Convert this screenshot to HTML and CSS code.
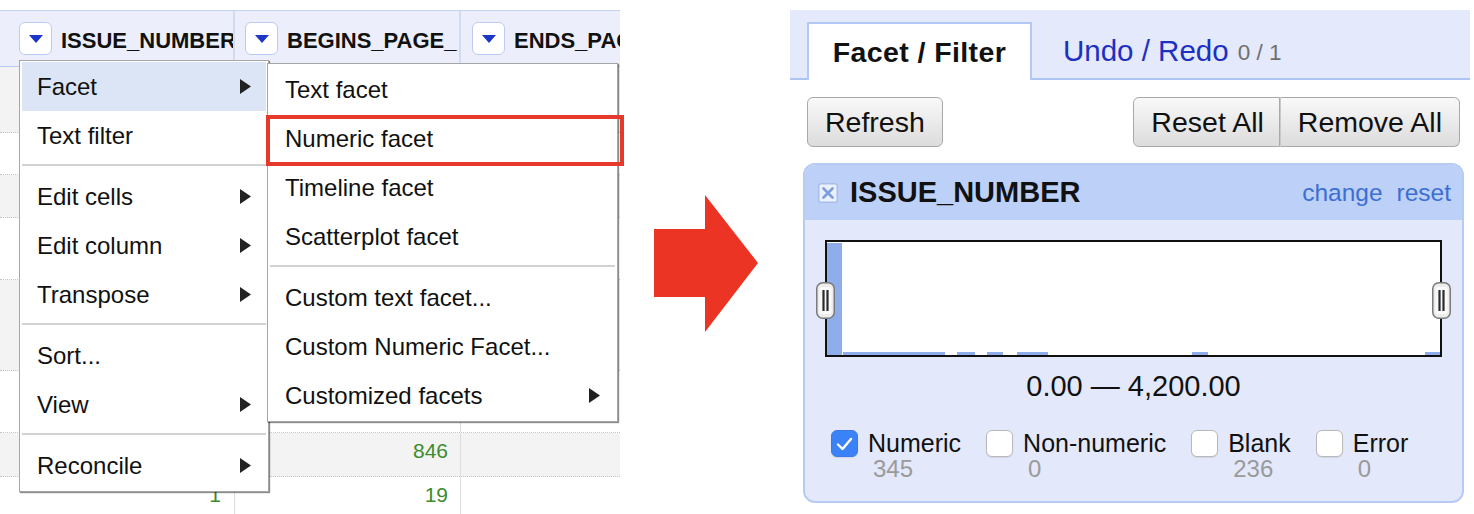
FILE: index.html
```html
<!DOCTYPE html>
<html>
<head>
<meta charset="utf-8">
<title>Numeric facet</title>
<link rel="stylesheet" href="styles.css">
</head>
<body>
<div class="page">
  <div class="grid-shot">
    <div class="table">
      <div class="thead">
        <div class="th c1"><span class="dd"><svg width="14" height="8" viewBox="0 0 14 8"><path d="M0 0H14L7 8Z" fill="#1b36c8"/></svg></span><span class="hname">ISSUE_NUMBER</span></div>
        <div class="th c2"><span class="dd"><svg width="14" height="8" viewBox="0 0 14 8"><path d="M0 0H14L7 8Z" fill="#1b36c8"/></svg></span><span class="hname">BEGINS_PAGE_</span></div>
        <div class="th c3"><span class="dd"><svg width="14" height="8" viewBox="0 0 14 8"><path d="M0 0H14L7 8Z" fill="#1b36c8"/></svg></span><span class="hname">ENDS_PAG</span></div>
      </div>
      <div class="tr r1 alt"><div class="td c1"></div><div class="td c2"></div><div class="td c3"></div></div>
      <div class="tr r2"><div class="td c1"></div><div class="td c2"></div><div class="td c3"></div></div>
      <div class="tr r3 alt"><div class="td c1"></div><div class="td c2"></div><div class="td c3"></div></div>
      <div class="tr r4"><div class="td c1"></div><div class="td c2"></div><div class="td c3"></div></div>
      <div class="tr r5 alt"><div class="td c1"></div><div class="td c2"></div><div class="td c3"></div></div>
      <div class="tr r6"><div class="td c1"></div><div class="td c2"></div><div class="td c3"></div></div>
      <div class="tr r7 alt"><div class="td c1"></div><div class="td c2">846</div><div class="td c3"></div></div>
      <div class="tr r8"><div class="td c1">1</div><div class="td c2">19</div><div class="td c3"></div></div>
    </div>

    <div class="menu main-menu">
      <div class="mi on"><span>Facet</span><svg class="arr" width="11" height="15" viewBox="0 0 11 15"><path d="M0 0L11 7.5L0 15Z"/></svg></div>
      <div class="mi"><span>Text filter</span></div>
      <div class="sep"></div>
      <div class="mi"><span>Edit cells</span><svg class="arr" width="11" height="15" viewBox="0 0 11 15"><path d="M0 0L11 7.5L0 15Z"/></svg></div>
      <div class="mi"><span>Edit column</span><svg class="arr" width="11" height="15" viewBox="0 0 11 15"><path d="M0 0L11 7.5L0 15Z"/></svg></div>
      <div class="mi"><span>Transpose</span><svg class="arr" width="11" height="15" viewBox="0 0 11 15"><path d="M0 0L11 7.5L0 15Z"/></svg></div>
      <div class="sep"></div>
      <div class="mi"><span>Sort...</span></div>
      <div class="mi"><span>View</span><svg class="arr" width="11" height="15" viewBox="0 0 11 15"><path d="M0 0L11 7.5L0 15Z"/></svg></div>
      <div class="sep"></div>
      <div class="mi"><span>Reconcile</span><svg class="arr" width="11" height="15" viewBox="0 0 11 15"><path d="M0 0L11 7.5L0 15Z"/></svg></div>
    </div>

    <div class="menu sub-menu">
      <div class="mi"><span>Text facet</span></div>
      <div class="mi"><span>Numeric facet</span></div>
      <div class="mi"><span>Timeline facet</span></div>
      <div class="mi"><span>Scatterplot facet</span></div>
      <div class="sep"></div>
      <div class="mi"><span>Custom text facet...</span></div>
      <div class="mi"><span>Custom Numeric Facet...</span></div>
      <div class="mi"><span>Customized facets</span><svg class="arr" width="11" height="15" viewBox="0 0 11 15"><path d="M0 0L11 7.5L0 15Z"/></svg></div>
    </div>

    <div class="highlight-box"></div>
  </div>

  <div class="arrow-wrap">
    <svg width="104" height="137" viewBox="0 0 104 137"><path d="M0 34H51V0L104 68L51 137V102H0Z" fill="#ec3425"/></svg>
  </div>

  <div class="side">
    <div class="tabs">
      <div class="tab active">Facet / Filter</div>
      <div class="tab other"><span class="tlink">Undo / Redo</span><span class="tcount">0 / 1</span></div>
    </div>
    <div class="toolbar">
      <div class="btn">Refresh</div>
      <div class="grp">
        <div class="btn">Reset All</div>
        <div class="btn">Remove All</div>
      </div>
    </div>
    <div class="facet">
      <div class="fhead">
        <svg class="fclose" width="20" height="20" viewBox="0 0 20 20"><rect x="0.75" y="0.75" width="18.5" height="18.5" rx="2" fill="#eaf0fd" stroke="#a9bdea" stroke-width="1.5"/><path d="M5.5 5.5L14.5 14.5M14.5 5.5L5.5 14.5" stroke="#7d9ddf" stroke-width="2.6" stroke-linecap="round"/></svg>
        <span class="ftitle">ISSUE_NUMBER</span>
        <span class="flinks"><span>change</span><span>reset</span></span>
      </div>
      <div class="fbody">
        <div class="hist">
          <svg width="613" height="113" viewBox="0 0 613 113">
            <rect x="0" y="1" width="15" height="112" fill="#8fadea"/>
            <rect x="16" y="110" width="102" height="3" fill="#8fadea"/>
            <rect x="130" y="110" width="18" height="3" fill="#8fadea"/>
            <rect x="160" y="110" width="16" height="3" fill="#8fadea"/>
            <rect x="190" y="110" width="31" height="3" fill="#8fadea"/>
            <rect x="365" y="110" width="16" height="3" fill="#8fadea"/>
            <rect x="598" y="110" width="15" height="3" fill="#8fadea"/>
          </svg>
          <svg class="handle left" width="19" height="37" viewBox="0 0 19 37"><rect x="0.75" y="0.75" width="17.5" height="35.5" rx="6" fill="#ececec" stroke="#7a7a7a" stroke-width="1.5"/><rect x="3.5" y="5" width="12" height="27" rx="2" fill="#fafafa"/><path d="M7.5 8V29M11.5 8V29" stroke="#2b2b2b" stroke-width="2.2"/></svg>
          <svg class="handle right" width="19" height="37" viewBox="0 0 19 37"><rect x="0.75" y="0.75" width="17.5" height="35.5" rx="6" fill="#ececec" stroke="#7a7a7a" stroke-width="1.5"/><rect x="3.5" y="5" width="12" height="27" rx="2" fill="#fafafa"/><path d="M7.5 8V29M11.5 8V29" stroke="#2b2b2b" stroke-width="2.2"/></svg>
        </div>
        <div class="range">0.00 — 4,200.00</div>
        <div class="opts">
          <div class="opt"><span class="cb on"><svg width="17" height="14" viewBox="0 0 17 14"><path d="M2 7.5L6.5 12L15 2" fill="none" stroke="#fff" stroke-width="2.4" stroke-linecap="round" stroke-linejoin="round"/></svg></span><div class="lbl"><div class="name">Numeric</div><div class="cnt">345</div></div></div>
          <div class="opt"><span class="cb"></span><div class="lbl"><div class="name">Non-numeric</div><div class="cnt">0</div></div></div>
          <div class="opt"><span class="cb"></span><div class="lbl"><div class="name">Blank</div><div class="cnt">236</div></div></div>
          <div class="opt"><span class="cb"></span><div class="lbl"><div class="name">Error</div><div class="cnt">0</div></div></div>
        </div>
      </div>
    </div>
  </div>
</div>
</body>
</html>
```

FILE: styles.css
```css
* { box-sizing: border-box; }
html, body { margin: 0; padding: 0; background: #fff; }
body {
  width: 1474px;
  height: 514px;
  overflow: hidden;
  font-family: "Liberation Sans", Arial, sans-serif;
  color: #111;
}
.page { display: flex; align-items: flex-start; padding-top: 10px; }

/* ---------- left: data table screenshot ---------- */
.grid-shot { position: relative; width: 620px; height: 504px; flex: none; }
.table { width: 620px; height: 504px; overflow: hidden; }
.thead {
  display: flex;
  height: 57px;
  background: #eceffb;
  border-top: 1px solid #c5d2f2;
  border-bottom: 1px solid #b9cbf2;
}
.th {
  display: flex;
  align-items: center;
  gap: 9px;
  overflow: hidden;
  white-space: nowrap;
  border-right: 2px solid #d3dbf0;
}
.th.c1 { width: 235px; padding-left: 19px; }
.th.c2 { width: 226px; padding-left: 10px; }
.th.c3 { flex: 1; padding-left: 11px; border-right: none; }
.dd {
  flex: none;
  width: 33px;
  height: 33px;
  background: #fff;
  border: 1.5px solid #bccbef;
  border-radius: 6px;
  display: flex;
  align-items: center;
  justify-content: center;
}
.hname { font-weight: bold; font-size: 22px; color: #111; padding-top: 4px; }

.tr { display: flex; border-bottom: 1px dotted #c4c4c4; background: #fff; }
.tr.alt { background: #f3f3f3; }
.r1 { height: 66px; }
.r2 { height: 42px; }
.r3 { height: 43px; }
.r4 { height: 62px; }
.r5 { height: 91px; }
.r6 { height: 62px; }
.r7 { height: 44px; }
.r8 { height: 44px; }
.td {
  font-size: 21px;
  line-height: 24px;
  padding-top: 6px;
  color: #3b8c2e;
  text-align: right;
}
.td.c1 { width: 235px; padding-right: 13px; border-right: 1px solid #dedede; }
.td.c2 { width: 226px; padding-right: 12px; border-right: 1px solid #dedede; }
.td.c3 { flex: 1; }

.menu {
  position: absolute;
  background: #fff;
  border: 1px solid #a6a6a6;
  box-shadow: 1px 1px 1px rgba(0, 0, 0, 0.45);
  padding: 1px 2px;
  font-size: 24px;
  color: #111;
}
.main-menu { left: 19px; top: 50px; width: 250px; }
.sub-menu { left: 267px; top: 53px; width: 351px; }
.mi {
  height: 49px;
  display: flex;
  align-items: center;
  justify-content: space-between;
  padding: 0 15px;
  white-space: nowrap;
}
.mi.on { background: #dce5f6; }
.arr { fill: #222; flex: none; }
.sep { height: 2px; background: #d2d2d2; margin: 4px 0 6px; }

.highlight-box {
  position: absolute;
  left: 266px;
  top: 105px;
  width: 358px;
  height: 51px;
  border: 4px solid #e5392b;
}

/* ---------- arrow ---------- */
.arrow-wrap { flex: none; margin-left: 34px; margin-top: 185px; width: 104px; height: 137px; }
.arrow-wrap svg { display: block; }

/* ---------- right: facet panel ---------- */
.side { flex: none; width: 680px; margin-left: 32px; }
.tabs {
  height: 70px;
  background: #e4e9fb;
  border-bottom: 2px solid #aec4f2;
  display: flex;
  align-items: flex-end;
  padding-left: 17px;
}
.tab {
  height: 58px;
  margin-bottom: -2px;
  display: flex;
  align-items: center;
  font-size: 28.5px;
  white-space: nowrap;
}
.tab.active {
  width: 225px;
  justify-content: center;
  background: #fff;
  border: 2px solid #b3c8f3;
  border-bottom: none;
  font-weight: bold;
  letter-spacing: 0.4px;
  color: #111;
}
.tab.other { padding-left: 31px; }
.tlink { color: #1c30c2; font-size: 29.5px; }
.tcount { color: #6f6f6f; font-size: 22.5px; margin-left: 9px; padding-top: 4px; }

.toolbar {
  display: flex;
  justify-content: space-between;
  padding: 17px 10px 0 17px;
}
.grp { display: flex; }
.btn {
  height: 50px;
  padding: 0 17px;
  display: flex;
  align-items: center;
  justify-content: center;
  font-size: 28.5px;
  color: #111;
  background: linear-gradient(#f9f9f9, #dcdcdc);
  border: 1.5px solid #a9a9a9;
  border-radius: 6px;
  white-space: nowrap;
}
.grp .btn:first-child { border-radius: 6px 0 0 6px; border-right-width: 1px; padding: 0 15px 0 17px; }
.grp .btn:last-child { border-radius: 0 6px 6px 0; border-left-width: 1px; border-left-color: #c9c9c9; }

.facet {
  margin: 16px 6px 0 13px;
  height: 340px;
  border: 2px solid #b8cbf3;
  border-radius: 12px;
  background: #e3e8fa;
  overflow: hidden;
}
.fhead {
  height: 55px;
  background: #bdd0f7;
  display: flex;
  align-items: center;
  padding: 0 11px 0 13px;
}
.fclose { flex: none; margin-right: 12px; }
.ftitle { font-weight: bold; font-size: 29px; color: #111; }
.flinks {
  margin-left: auto;
  display: flex;
  gap: 14px;
  font-size: 24.5px;
  color: #3c6fd3;
}
.fbody { padding: 20px 20px 0; }
.hist {
  position: relative;
  width: 617px;
  height: 117px;
  border: 2px solid #111;
  background: #fff;
}
.hist > svg:first-child { display: block; }
.handle { position: absolute; top: 40px; }
.handle.left { left: -11px; }
.handle.right { right: -11px; }
.range {
  margin-top: 12px;
  text-align: center;
  font-size: 29px;
  line-height: 34px;
  color: #111;
}
.opts { display: flex; gap: 25px; padding-left: 6px; margin-top: 27px; }
.opt { display: flex; gap: 10px; align-items: flex-start; }
.cb {
  flex: none;
  width: 27px;
  height: 27px;
  border-radius: 6px;
  background: #fff;
  border: 1.5px solid #b8b8b8;
  box-shadow: 0 1px 1px rgba(0, 0, 0, 0.08);
  display: flex;
  align-items: center;
  justify-content: center;
}
.cb.on { background: #3b82f6; border-color: #3b7ae8; }
.name { font-size: 25px; line-height: 27px; color: #111; white-space: nowrap; }
.cnt { font-size: 24px; line-height: 24px; color: #9a9a9a; padding-left: 5px; }
```
